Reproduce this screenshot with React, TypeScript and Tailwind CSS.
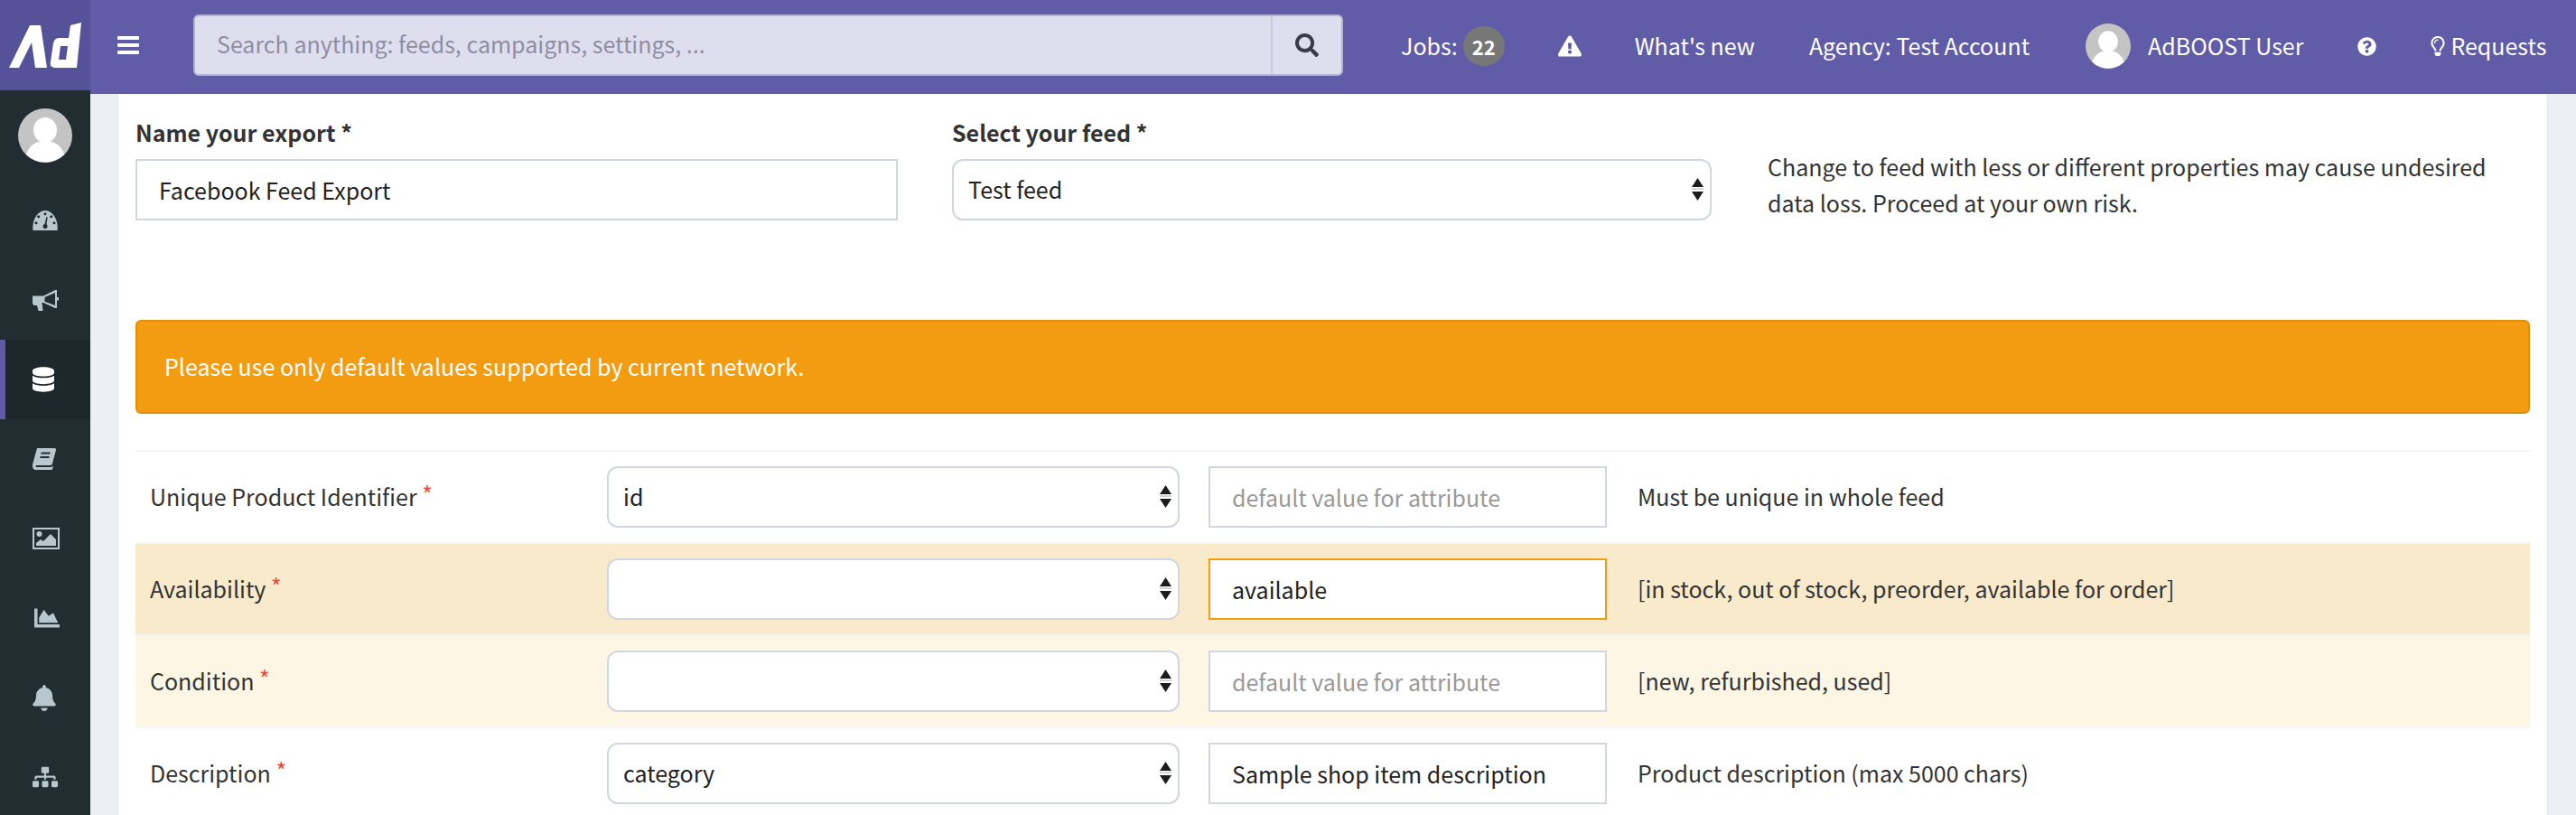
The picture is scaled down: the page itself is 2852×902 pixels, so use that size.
import React from 'react';
import {
  FaBell,
  FaChartArea,
  FaDatabase,
  FaExclamationTriangle,
  FaQuestionCircle,
  FaRegLightbulb,
  FaSearch,
  FaSitemap,
} from 'react-icons/fa';

const Avatar = ({ className }: { className: string }) => (
  <svg viewBox="0 0 60 60" className={className}>
    <circle cx="30" cy="30" r="30" fill="#c4c4c4" />
    <ellipse cx="30" cy="24" rx="13" ry="14" fill="#fff" />
    <path d="M9 51c3-10 11-15 21-15s18 5 21 15a30 30 0 0 1-42 0z" fill="#fff" />
  </svg>
);

const Logo = () => (
  <svg viewBox="0 0 100 100" className="w-[100px] h-[100px]" fill="#fff">
    <path d="M10 75 33 28h12l7 47H39l-4-28-14 28z" />
    <path fillRule="evenodd" d="M90 25l-5 50H62c-5 0-7-2-6-7l3-20c1-4 3-6 7-6h10l2-14zM67 51h8l-2 15h-8z" />
  </svg>
);

const Bars = () => (
  <svg viewBox="0 0 24 20" className="w-[24px] h-[20px]" fill="currentColor">
    <rect width="24" height="4" rx="1" />
    <rect y="8" width="24" height="4" rx="1" />
    <rect y="16" width="24" height="4" rx="1" />
  </svg>
);

const Gauge = () => (
  <svg viewBox="0 0 28 22" className="w-[28px] h-[22px]">
    <path d="M.5 22C-1 10 6 0 14 0s15 10 13.500 22z" fill="currentColor" />
    <g fill="#222d32">
      <circle cx="14" cy="3.800" r="1.500" />
      <circle cx="6.700" cy="6.700" r="1.500" />
      <circle cx="20.700" cy="6.700" r="1.500" />
      <circle cx="4" cy="13.700" r="1.500" />
      <circle cx="24" cy="13.700" r="1.500" />
      <circle cx="14" cy="17.500" r="2.500" />
      <path d="M13 17l2.500-10 1.200.3-1.500 10z" />
    </g>
  </svg>
);

const Bullhorn = () => (
  <svg viewBox="0 0 29 23" className="w-[29px] h-[23px]" fill="currentColor">
    <path
      fillRule="evenodd"
      d="M0 6.500h12L25 0h2v8h2v3.500h-2V20h-2l-13-6H10.500l1 9H6.500L5 17H1.500L0 15zM13.500 8v4.800L25 17V3z"
    />
  </svg>
);

const BookIcon = () => (
  <svg viewBox="0 0 26 24" className="w-[26px] h-[24px]">
    <path
      d="M5 0h19c2 0 2 1 2 2l-4 15c0 1-1 2-3 2H5c-2 0-2 2 0 2h15l3-1-1 3c0 1-1 1-2 1H4c-3 0-4-2-4-5 0-.5 0-1 .2-1.500z"
      fill="currentColor"
    />
    <path d="M9.500 5.500h10M8.500 10h10" stroke="#222d32" strokeWidth="2" />
  </svg>
);

const ImageIcon = () => (
  <svg viewBox="0 0 30 24" className="w-[30px] h-[24px]" fill="currentColor">
    <path fillRule="evenodd" d="M0 0h30v24H0zM2 2v20h26V2z" />
    <circle cx="7.500" cy="7" r="3" />
    <path d="M4 20v-3l5-4 3 2 8-8 6 6v7z" />
  </svg>
);

const Fa = ({ icon: Icon, className }: { icon: React.ElementType; className: string }) => <Icon className={className} />;

const SelectArrows = () => (
  <svg viewBox="0 0 13 25" className="absolute right-[9px] top-[21px] w-[13px] h-[25px] pointer-events-none" fill="#1c1c1c">
    <path d="M6.500 0l6.500 10H0z" />
    <rect y="11.500" width="13" height="1" fill="#aaa" />
    <path d="M6.500 25L0 15h13z" />
  </svg>
);

const Select = ({ value, className }: { value: string; className: string }) => (
  <div className={`relative h-[68px] shrink-0 ${className}`}>
    <select
      defaultValue={value}
      className="w-full h-full appearance-none bg-white border-2 border-[#d2d6e0] rounded-[12px] pl-[16px] text-[#222] outline-none"
    >
      <option value={value}>{value}</option>
    </select>
    <SelectArrows />
  </div>
);

const sideItems = [
  { node: <Gauge /> },
  { node: <Bullhorn /> },
  { node: <Fa icon={FaDatabase} className="w-[24px] h-[28px]" />, active: true },
  { node: <BookIcon /> },
  { node: <ImageIcon /> },
  { node: <Fa icon={FaChartArea} className="w-[32px] h-[28px]" /> },
  { node: <Fa icon={FaBell} className="w-[26px] h-[29px]" /> },
  { node: <Fa icon={FaSitemap} className="w-[28px] h-[26px]" /> },
];

const rows = [
  { label: 'Unique Product Identifier', select: 'id', input: '', help: 'Must be unique in whole feed', bg: 'bg-white' },
  { label: 'Availability', select: '', input: 'available', help: '[in stock, out of stock, preorder, available for order]', bg: 'bg-[#f9eacc]', focus: true },
  { label: 'Condition', select: '', input: '', help: '[new, refurbished, used]', bg: 'bg-[#fdf6e4]' },
  { label: 'Description', select: 'category', input: 'Sample shop item description', help: 'Product description (max 5000 chars)', bg: 'bg-white' },
];

export default function App() {
  return (
    <div className="w-[2852px] h-[902px] overflow-hidden flex flex-col bg-[#ecf0f5] text-[25px] font-['Noto_Sans_CJK_SC',sans-serif] text-[#333]">
      <header className="flex h-[104px] shrink-0 bg-[#605ca8] text-white">
        <div className="w-[100px] h-[100px] bg-[#555299]">
          <Logo />
        </div>
        <div className="w-[114px] pt-[40px] pl-[30px]">
          <Bars />
        </div>
        <div className="flex w-[1273px] h-[68px] mt-[16px] bg-[#dfdeee] border-2 border-[#b4b2d4] rounded-[6px]">
          <input
            placeholder="Search anything: feeds, campaigns, settings, ..."
            className="flex-1 px-[24px] pb-[2px] bg-transparent outline-none placeholder:text-[#8e8da3]"
          />
          <div className="w-[78px] flex items-center justify-center border-l-2 border-[#c9c8de]">
            <FaSearch className="w-[26px] h-[26px] text-[#3b3a4a]" />
          </div>
        </div>
        <div className="flex items-center h-[102px] pl-[64px]">
          <span>Jobs:</span>
          <span className="ml-[6px] w-[46px] h-[44px] rounded-full bg-[#777] flex items-center justify-center text-[22px] font-bold">22</span>
          <FaExclamationTriangle className="ml-[59px] w-[26px] h-[24px]" />
          <span className="ml-[59px]">What's new</span>
          <span className="ml-[60px]">Agency: Test Account</span>
          <Avatar className="ml-[62px] w-[50px] h-[50px]" />
          <span className="ml-[19px]">AdBOOST User</span>
          <FaQuestionCircle className="ml-[60px] w-[21px] h-[21px]" />
          <FaRegLightbulb className="ml-[60px] w-[16px] h-[22px]" />
          <span className="ml-[6px]">Requests</span>
        </div>
      </header>

      <div className="flex flex-1 min-h-0 -mt-[4px]">
        <aside className="w-[100px] shrink-0 bg-[#222d32] text-[#b8c7ce]">
          <div className="h-[100px] flex items-center justify-center">
            <Avatar className="w-[60px] h-[60px]" />
          </div>
          <nav>
            {sideItems.map((item, i) => (
              <div
                key={i}
                className={`h-[88px] flex items-center pl-[30px] border-l-[6px] ${
                  item.active ? 'border-[#605ca8] bg-[#1e282c] text-white' : 'border-transparent'
                }`}
              >
                {item.node}
              </div>
            ))}
          </nav>
        </aside>

        <div className="flex-1 min-w-0 pt-[4px] pl-[30px] pr-[31px]">
          <main className="h-full bg-white border-x border-[#e2e6ec] px-[19px] overflow-hidden">
            <div className="flex pt-[24px]">
              <div className="w-[844px] shrink-0">
                <label className="block h-[48px] font-bold leading-[36px]">Name your export *</label>
                <input
                  readOnly
                  value="Facebook Feed Export"
                  className="block w-full h-[68px] border-2 border-[#d2d6e0] px-[24px] text-[#222] outline-none"
                />
              </div>
              <div className="w-[841px] ml-[60px] shrink-0">
                <label className="block h-[48px] font-bold leading-[36px]">Select your feed *</label>
                <Select value="Test feed" className="w-full" />
              </div>
              <p className="ml-[62px] flex-1 mt-[36px] leading-[40px]">
                Change to feed with less or different properties may cause undesired data loss. Proceed at your own risk.
              </p>
            </div>

            <div className="mt-[110px] h-[104px] bg-[#f39c12] border-2 border-[#e08e0b] rounded-[6px] flex items-center px-[30px] text-white">
              Please use only default values supported by current network.
            </div>

            <div className="mt-[40px] border-t-2 border-[#f4f4f4]">
              {rows.map((row, i) => (
                <div key={i} className={`flex items-center h-[102px] border-b-2 border-[#f4f4f4] ${row.bg}`}>
                  <div className="w-[522px] shrink-0 pl-[16px]">
                    {row.label} <span className="text-[#e74c3c] relative -top-[3px]">*</span>
                  </div>
                  <Select value={row.select} className="w-[634px]" />
                  <input
                    readOnly
                    value={row.input}
                    placeholder="default value for attribute"
                    className={`ml-[32px] w-[441px] shrink-0 h-[68px] border-2 px-[24px] text-[#222] outline-none placeholder:text-[#999] bg-white ${
                      row.focus ? 'border-[#f39c12]' : 'border-[#d2d6e0]'
                    }`}
                  />
                  <span className="ml-[34px]">{row.help}</span>
                </div>
              ))}
            </div>
          </main>
        </div>
      </div>
    </div>
  );
}
